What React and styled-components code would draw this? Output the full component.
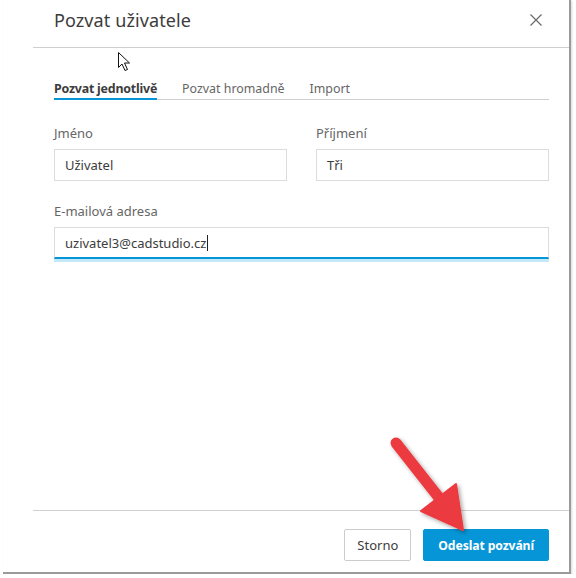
import React from "react";
import styled, { createGlobalStyle } from "styled-components";

const GlobalStyle = createGlobalStyle`
  html, body {
    margin: 0;
    padding: 0;
    background: #ffffff;
  }
  body {
    font-family: "Noto Sans", "Open Sans", Arial, sans-serif;
    color: #3c3c3c;
  }
`;

const Frame = styled.div`
  position: relative;
  margin-left: 3px;
  width: 566px;
  height: 572px;
  border-right: 2px solid #9a9a9a;
  border-bottom: 2px solid #9a9a9a;
  box-shadow: 1px 1px 2px rgba(0, 0, 0, 0.15);
  background: #fff;
`;

const Dialog = styled.div`
  margin-left: 30px;
  height: 100%;
  display: flex;
  flex-direction: column;
`;

const Header = styled.div`
  height: 48px;
  box-sizing: border-box;
  border-bottom: 1px solid #cfcfcf;
  display: flex;
  align-items: center;
  justify-content: space-between;
  padding: 0 26px 8px 21px;
`;

const Title = styled.h1`
  margin: 0;
  font-size: 18px;
  font-weight: 400;
  color: #3c3c3c;
  letter-spacing: 0.1px;
`;

const CloseButton = styled.button`
  border: 0;
  background: none;
  padding: 0;
  width: 14px;
  height: 14px;
  display: flex;
  cursor: pointer;
`;

const Body = styled.div`
  flex: 1;
  padding: 33px 20px 0 21px;
`;

const Tabs = styled.div`
  display: flex;
  gap: 25px;
  border-bottom: 1px solid #cfcfcf;
`;

const Tab = styled.div`
  font-size: 12.4px;
  line-height: 16px;
  padding-bottom: 1px;
  color: ${(p) => (p.$active ? "#3c3c3c" : "#666")};
  font-weight: ${(p) => (p.$active ? 700 : 400)};
  letter-spacing: ${(p) => (p.$active ? "-0.2px" : "0")};
  border-bottom: 2px solid ${(p) => (p.$active ? "#0696d7" : "transparent")};
  margin-bottom: -1px;
`;

const Row = styled.div`
  display: grid;
  grid-template-columns: ${(p) => (p.$single ? "1fr" : "233px 233px")};
  justify-content: space-between;
  margin-top: ${(p) => p.$top}px;
`;

const Field = styled.div`
  display: flex;
  flex-direction: column;
`;

const Label = styled.label`
  font-size: 13px;
  line-height: 18px;
  color: #666;
  margin-bottom: 7px;
`;

const Input = styled.div`
  height: 32px;
  box-sizing: border-box;
  border: 1px solid #dcdcdc;
  border-bottom: ${(p) => (p.$focused ? "2px solid #0696d7" : "1px solid #dcdcdc")};
  box-shadow: ${(p) => (p.$focused ? "0 3px 0 #c3e8f8" : "none")};
  padding: 0 10px;
  display: flex;
  align-items: center;
  font-size: 13px;
  color: #3c3c3c;
`;

const Caret = styled.span`
  display: inline-block;
  width: 1px;
  height: 16px;
  background: #222;
  margin-left: 1px;
`;

const Footer = styled.div`
  border-top: 1px solid #cfcfcf;
  height: 62px;
  box-sizing: border-box;
  display: flex;
  justify-content: flex-end;
  align-items: flex-start;
  gap: 12px;
  padding: 18px 20px 0 0;
`;

const Button = styled.button`
  height: 32px;
  box-sizing: border-box;
  padding: 0 ${(p) => (p.$primary ? "14px" : "12px")};
  font-family: inherit;
  font-size: ${(p) => (p.$primary ? "12.2px" : "13px")};
  letter-spacing: ${(p) => (p.$primary ? "-0.1px" : "0")};
  border-radius: 2px;
  cursor: pointer;
  border: 1px solid ${(p) => (p.$primary ? "#0696d7" : "#cccccc")};
  background: ${(p) => (p.$primary ? "#0696d7" : "#fff")};
  color: ${(p) => (p.$primary ? "#fff" : "#3c3c3c")};
  font-weight: ${(p) => (p.$primary ? 700 : 400)};
`;

const Overlay = styled.svg`
  position: absolute;
  left: -3px;
  top: 0;
  pointer-events: none;
`;

const App = () => {
  return (
    <Frame>
      <GlobalStyle />
      <Dialog>
        <Header>
          <Title>Pozvat uživatele</Title>
          <CloseButton aria-label="Zavřít">
            <svg width="14" height="14" viewBox="0 0 14 14">
              <path d="M1.5 1.5 L12.5 12.5 M12.5 1.5 L1.5 12.5" stroke="#6a6a6a" strokeWidth="1.2" />
            </svg>
          </CloseButton>
        </Header>
        <Body>
          <Tabs>
            <Tab $active>Pozvat jednotlivě</Tab>
            <Tab>Pozvat hromadně</Tab>
            <Tab>Import</Tab>
          </Tabs>
          <Row $top={24}>
            <Field>
              <Label>Jméno</Label>
              <Input>Uživatel</Input>
            </Field>
            <Field>
              <Label>Příjmení</Label>
              <Input>Tři</Input>
            </Field>
          </Row>
          <Row $single $top={21}>
            <Field>
              <Label>E-mailová adresa</Label>
              <Input $focused>
                uzivatel3@cadstudio.cz
                <Caret />
              </Input>
            </Field>
          </Row>
        </Body>
        <Footer>
          <Button>Storno</Button>
          <Button $primary>Odeslat pozvání</Button>
        </Footer>
      </Dialog>
      <Overlay width="576" height="578" viewBox="0 0 576 578">
        <defs>
          <filter id="sh" x="-20%" y="-20%" width="150%" height="150%">
            <feDropShadow dx="2" dy="2" stdDeviation="2" floodColor="#000" floodOpacity="0.35" />
          </filter>
        </defs>
        <g filter="url(#sh)">
          <line x1="396" y1="443" x2="444" y2="504" stroke="#ec3a3f" strokeWidth="11" strokeLinecap="round" />
          <polygon points="463,530 421,511 456,484" fill="#ec3a3f" strokeLinejoin="round" stroke="#ec3a3f" strokeWidth="2" />
        </g>
        <path
          d="M118.5 52.5 L118.5 67.5 L122 64 L125 70.5 L127.5 69.5 L124.5 63 L129.5 63 Z"
          fill="#fff"
          stroke="#111"
          strokeWidth="1"
          strokeLinejoin="round"
        />
      </Overlay>
    </Frame>
  );
};

export default App;
